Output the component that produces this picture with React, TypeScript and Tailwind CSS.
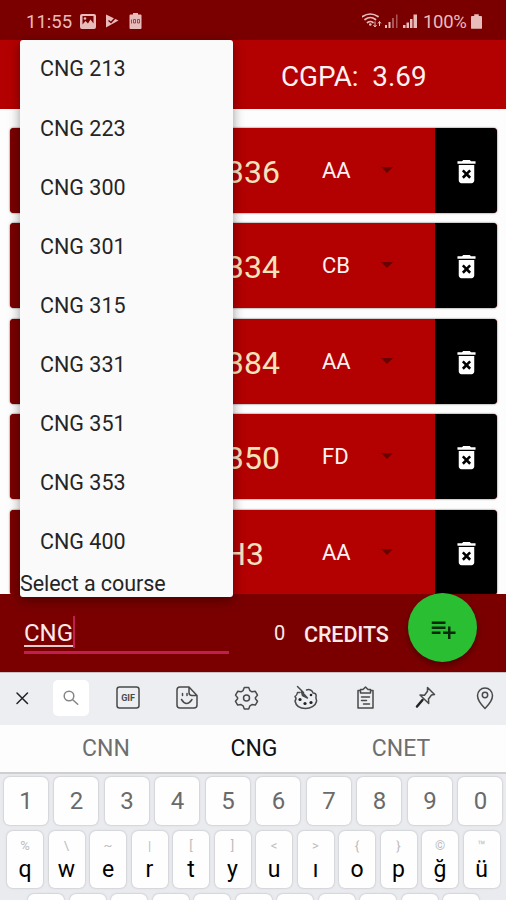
import { MdDeleteForever, MdPlaylistAdd } from 'react-icons/md';

interface Course {
    code: string;
    grade: string;
}

interface LetterKey {
    letter: string;
    symbol: string;
}

const courses: Course[] = [
    { code: 'CNG 336', grade: 'AA' },
    { code: 'CNG 334', grade: 'CB' },
    { code: 'CNG 384', grade: 'AA' },
    { code: 'CNG 350', grade: 'FD' },
    { code: 'H3', grade: 'AA' },
];

const options = [
    'CNG 213',
    'CNG 223',
    'CNG 300',
    'CNG 301',
    'CNG 315',
    'CNG 331',
    'CNG 351',
    'CNG 353',
    'CNG 400',
];

const digits = ['1', '2', '3', '4', '5', '6', '7', '8', '9', '0'];

const letters: LetterKey[] = [
    { letter: 'q', symbol: '%' },
    { letter: 'w', symbol: '\\' },
    { letter: 'e', symbol: '~' },
    { letter: 'r', symbol: '|' },
    { letter: 't', symbol: '[' },
    { letter: 'y', symbol: ']' },
    { letter: 'u', symbol: '<' },
    { letter: 'ı', symbol: '>' },
    { letter: 'o', symbol: '{' },
    { letter: 'p', symbol: '}' },
    { letter: 'ğ', symbol: '©' },
    { letter: 'ü', symbol: '™' },
];

function StatusBar() {
    return (
        <div className="flex h-10 shrink-0 items-center bg-[#7a0000] pl-[26px] pr-6 pt-[2px] text-[#e9bcbc]">
            <span className="w-[54px] pt-[2px] text-[18.500px] leading-none">
                11:55
            </span>
            <svg width="16" height="15" viewBox="0 0 16 15" className="shrink-0">
                <path
                    fillRule="evenodd"
                    fill="currentColor"
                    d="M2 0h12a2 2 0 0 1 2 2v11a2 2 0 0 1-2 2H2a2 2 0 0 1-2-2V2a2 2 0 0 1 2-2zm.5 2v8.500l3-3.500 2.500 2.500 2.500-4 3 4V2z"
                />
                <circle cx="5" cy="4.500" r="1.300" fill="currentColor" />
            </svg>
            <svg
                width="14"
                height="14"
                viewBox="0 0 14 14"
                className="ml-[9px] shrink-0"
            >
                <path fill="currentColor" d="M1 0.500 13.500 6.500 1 13.500z" />
                <path
                    d="M3.500 6.500 6 8.500 11 3"
                    fill="none"
                    stroke="#7a0000"
                    strokeWidth="1.500"
                />
            </svg>
            <svg
                width="13"
                height="16"
                viewBox="0 0 13 16"
                className="ml-[10px] shrink-0"
            >
                <path
                    fill="currentColor"
                    d="M4 0h5v1.500h2.500q1 0 1 1V15q0 1-1 1h-10q-1 0-1-1V2.500q0-1 1-1H4z"
                />
                <path
                    d="M2.500 6.500v4M4.500 6.500h2v3.500h-2zM8.500 6.500h2v3.500h-2z"
                    fill="none"
                    stroke="#9b3a3a"
                    strokeWidth="0.900"
                />
            </svg>
            <svg
                width="58"
                height="16"
                viewBox="0 0 58 16"
                className="ml-auto shrink-0"
            >
                <g
                    fill="none"
                    stroke="currentColor"
                    strokeWidth="1.700"
                    strokeLinecap="round"
                >
                    <path d="M0.500 3.500q8-5 15.500 0" />
                    <path d="M3 6.500q5.500-4 10.500 0" />
                    <path d="M5.500 9.500q3-2 5.500 0" />
                </g>
                <circle cx="8.300" cy="11.500" r="1.300" fill="currentColor" />
                <path
                    d="M13 8.500v5M11.500 12l1.500 2 1.500-2M17.500 13v-4.500M16 10.500l1.500-2 1.500 2"
                    fill="none"
                    stroke="currentColor"
                    strokeWidth="1"
                />
                <path
                    fill="currentColor"
                    d="M23 12h2v3h-2zM26.500 9h2v6h-2zM41 12h2.500v3H41zM44.500 9.500H47V15h-2.500zM48 6h2.500v9H48zM51.500 1.500H55V15h-3.500z"
                />
                <path
                    fill="currentColor"
                    opacity="0.450"
                    d="M30 5h2v10h-2zM34 1.500h1.500V15H34z"
                />
            </svg>
            <span className="ml-[3px] w-[48px] pt-[2px] text-[18.500px] leading-none tracking-[-0.3px]">
                100%
            </span>
            <svg width="11" height="15" viewBox="0 0 12 16" className="shrink-0">
                <path
                    fill="currentColor"
                    d="M3.500 0h5v2H11q1 0 1 1v12q0 1-1 1H1q-1 0-1-1V3q0-1 1-1h2.500z"
                />
            </svg>
        </div>
    );
}

function CourseCard({ code, grade }: Course) {
    return (
        <div className="flex h-[85px] shrink-0 overflow-hidden rounded-[4px] bg-[#b30000] shadow-[0_0_2px_rgba(0,0,0,0.7)]">
            <div className="w-[62px] shrink-0 bg-[#7a0000]" />
            <div className="flex w-[250px] shrink-0 items-center pt-[3px] text-[#f3e3bd]">
                <span
                    className={
                        code === 'H3'
                            ? 'w-[192px] text-right text-[32px]'
                            : 'w-[208px] text-right text-[32px]'
                    }
                >
                    {code}
                </span>
            </div>
            <div className="flex w-[56px] shrink-0 items-center text-[22px] text-[#fff2f2]">
                {grade}
            </div>
            <svg viewBox="0 0 12 6" className="mt-[39px] ml-[3px] h-[6px] w-[12px]">
                <path d="M0 0h12L6 6z" fill="#6a0000" />
            </svg>
            <div className="ml-auto flex w-[62px] shrink-0 items-center justify-center bg-black pt-[2px] text-white">
                <MdDeleteForever className="size-[31px]" />
            </div>
        </div>
    );
}

function CourseMenu() {
    return (
        <div className="absolute left-[20px] top-[40px] flex h-[557px] w-[213px] flex-col rounded-[3px] bg-[#fafafa] text-[21.500px] text-[#252525] shadow-[0_3px_12px_rgba(0,0,0,0.4)]">
            {options.map((option) => (
                <div
                    key={option}
                    className="flex h-[59.100px] shrink-0 items-center pl-5"
                >
                    {option}
                </div>
            ))}
            <div className="-mt-px whitespace-nowrap text-[21.500px] leading-[26px] tracking-[-0.07px]">
                Select a course
            </div>
        </div>
    );
}

function AddCourseBar() {
    return (
        <div className="relative flex h-[78px] shrink-0 bg-[#7a0000] text-[#fbeaea]">
            <div className="ml-6 mt-[22px] flex h-[38px] w-[205px] items-start border-b-[3px] border-[#c02050]">
                <span className="mt-[5px] border-b-2 border-[#e8cccc] text-[24px] leading-[24px]">
                    CNG
                </span>
                <span className="h-[32px] w-[2px] bg-[#c02050]" />
            </div>
            <span className="ml-[45px] mt-[26px] h-[30px] w-[30px] text-[20px] leading-[27px]">
                0
            </span>
            <span className="mt-[27px] text-[21.500px] leading-[27px] font-medium tracking-[-0.1px]">
                CREDITS
            </span>
            <button className="absolute left-[408px] -top-px flex size-[69px] items-center justify-center rounded-full bg-[#2abf32] pt-[2px] text-[#0b2a0c] shadow-[0_3px_6px_rgba(0,0,0,0.35)]">
                <MdPlaylistAdd className="size-[30px]" />
            </button>
        </div>
    );
}

function KeyboardToolbar() {
    return (
        <div className="flex h-[53px] shrink-0 items-center border-t border-[#c9c3c6] bg-[#eceef2] text-[#4a4a4a]">
            <svg
                viewBox="0 0 506 52"
                className="h-[52px] w-[506px]"
                fill="none"
                stroke="currentColor"
                strokeWidth="1.500"
                strokeLinecap="round"
                strokeLinejoin="round"
            >
                <path d="M17 20l10.500 10.500M27.500 20L17 30.500" stroke="#222" />
                <rect x="53" y="7" width="36" height="36" rx="5" fill="#fff" stroke="none" />
                <g stroke="#858585">
                    <circle cx="69" cy="23" r="4.800" />
                    <path d="M72.700 26.700l5 4.500" />
                </g>
                <rect x="117" y="14" width="22" height="21" rx="2.500" />
                <text
                    x="128"
                    y="28"
                    textAnchor="middle"
                    fontSize="9"
                    fontWeight="700"
                    fill="currentColor"
                    stroke="none"
                >
                    GIF
                </text>
                {/* sticker */}
                <path d="M189 14h-9q-3 0-3 3v15q0 3 3 3h14q3 0 3-3V22.500zM189 14v5.500q0 3 3 3h5" />
                <path d="M182.500 20.500v2M187 20.500v2M181.500 26.500q5 8 10.500 0" />
                {/* settings */}
                <path d="M244.300 14.500h4.400l1.200 3.100 2.100 1.200 3.300-.5 2.200 3.800-2.100 2.600v1l2.100 2.600-2.200 3.800-3.300-.5-2.100 1.200-1.200 3.100h-4.400l-1.200-3.100-2.100-1.200-3.300.5-2.200-3.800 2.100-2.600v-1l-2.100-2.600 2.200-3.800 3.300.5 2.100-1.200z" />
                <circle cx="246.500" cy="25" r="3" />
                {/* themes */}
                <path d="M300 19.500h-2.500q-.5 3-2.500 4 2 2 0 4.500c1 5 5.500 7.500 10.500 7.500s10-2.500 11-7c.5-2-1-2.500-.5-4.500.8-3-1-4-3-4-.5-3-4-4-6.500-3" />
                <path d="M297.500 13.500l6 6" />
                <path d="M301.500 18.500l6 6.500-5-2.500z" fill="currentColor" />
                <g fill="#222" stroke="none">
                    <circle cx="300" cy="26.500" r="1.600" />
                    <circle cx="305" cy="30.500" r="1.600" />
                    <circle cx="311" cy="29.500" r="1.600" />
                    <circle cx="311" cy="22" r="1.300" />
                </g>
                {/* clipboard */}
                <path d="M360.500 17.500h-2.500v17.500h15V17.500h-2.500M360.500 20v-3.500h2.500l2.500-2.500 2.500 2.500h2.500V20zM361.500 24h8M361.500 27.500h5M363.500 31h6" />
                {/* pin */}
                <path d="M427.500 14.500l7 7-3 .5-3 4 .2 4.500-8.700-8.500 4.500.2 3-4z" />
                <path d="M422.500 27l-5.500 6.500" strokeWidth="2.500" stroke="#222" />
                {/* location */}
                <path d="M485 35.500q-7.500-7.500-7.500-13a7.500 7.500 0 0 1 15 0q0 5.500-7.500 13z" />
                <circle cx="485" cy="22" r="2.700" />
            </svg>
        </div>
    );
}

function Keyboard() {
    return (
        <div className="flex flex-1 flex-col bg-[#eaebef]">
            <div className="flex h-[49px] shrink-0 items-center border-b-2 border-[#cfcfd1] bg-[#fdfdfd] pt-[2px] text-[23px] text-[#6e6e6e]">
                <span className="w-[212px] text-center">CNN</span>
                <span className="w-[84px] text-center text-[#111]">CNG</span>
                <span className="w-[210px] text-center">CNET</span>
            </div>
            <div className="flex shrink-0 gap-[6.500px] pl-[3.500px] pt-[3px]">
                {digits.map((digit) => (
                    <div
                        key={digit}
                        className="flex h-[48px] w-[44px] shrink-0 items-center justify-center rounded-[6px] bg-[#fefefe] pl-px text-[24px] text-[#6a6a6a] shadow-[0_0_1.500px_1px_#d3d4d8]"
                    >
                        {digit}
                    </div>
                ))}
            </div>
            <div className="flex shrink-0 gap-[5.500px] pl-[7px] pt-[6px]">
                {letters.map(({ letter, symbol }) => (
                    <div
                        key={letter}
                        className="flex h-[57px] w-[36px] shrink-0 flex-col items-center rounded-[6px] bg-[#fefefe] shadow-[0_0_1.500px_1px_#d3d4d8]"
                    >
                        <span className="mt-[7px] h-[15px] text-[13px] leading-[15px] text-[#bcbcbc]">
                            {symbol}
                        </span>
                        <span className="mt-[3px] text-[23px] leading-[28px] text-black">
                            {letter}
                        </span>
                    </div>
                ))}
            </div>
            <div className="flex shrink-0 gap-[5.500px] pl-[28px] pt-[6px]">
                {letters.slice(0, 11).map(({ letter }) => (
                    <div
                        key={letter}
                        className="h-[56px] w-[36px] shrink-0 rounded-[6px] bg-[#fefefe] shadow-[0_0_1.500px_1px_#d3d4d8]"
                    />
                ))}
            </div>
        </div>
    );
}

export default function App() {
    return (
        <div className="relative flex h-[900px] w-[506px] flex-col overflow-hidden bg-[#fdfdfd] font-['Roboto',sans-serif]">
            <StatusBar />
            <header className="flex h-[69px] shrink-0 items-center whitespace-pre bg-[#b30000] pl-[281px] pt-[5px] text-[27.800px] text-[#fff2f2]">
                CGPA:  3.69
            </header>
            <main className="flex h-[485px] shrink-0 flex-col gap-[10.400px] overflow-hidden pl-[10px] pr-[9px] pt-[19px]">
                {courses.map((course) => (
                    <CourseCard key={course.code} {...course} />
                ))}
            </main>
            <AddCourseBar />
            <KeyboardToolbar />
            <Keyboard />
            <CourseMenu />
        </div>
    );
}
